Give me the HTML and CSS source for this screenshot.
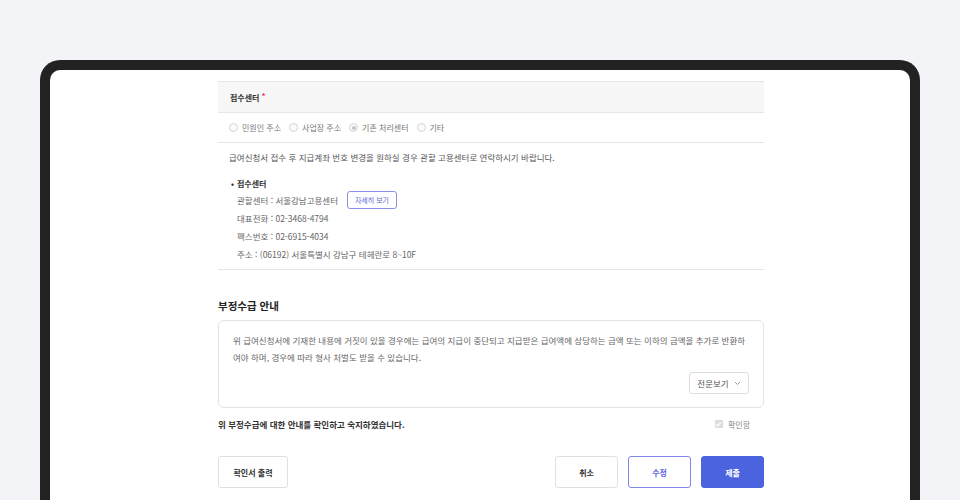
FILE: index.html
```html
<!DOCTYPE html>
<html lang="ko">
<head>
<meta charset="utf-8">
<link rel="stylesheet" href="styles.css">
</head>
<body>
<div class="device">
  <div class="content">
    <div class="field-head">접수센터 <span class="req">*</span></div>
    <div class="radio-row">
      <label class="radio"><span class="dot"></span>민원인 주소</label>
      <label class="radio"><span class="dot"></span>사업장 주소</label>
      <label class="radio"><span class="dot checked"></span>기존 처리센터</label>
      <label class="radio"><span class="dot"></span>기타</label>
    </div>
    <div class="info">
      <p class="notice">급여신청서 접수 후 지급계좌 번호 변경을 원하실 경우 관할 고용센터로 연락하시기 바랍니다.</p>
      <div class="bullet-title"><span class="bullet">•</span>접수센터</div>
      <div class="detail-row">관할센터 : 서울강남고용센터 <button class="btn-detail">자세히 보기</button></div>
      <div class="detail">대표전화 : 02-3468-4794</div>
      <div class="detail">팩스번호 : 02-6915-4034</div>
      <div class="detail">주소 : (06192) 서울특별시 강남구 테헤란로 8~10F</div>
    </div>

    <h2 class="sec-title">부정수급 안내</h2>
    <div class="notice-box">
      <p class="notice-text">위 급여신청서에 기재한 내용에 거짓이 있을 경우에는 급여의 지급이 중단되고 지급받은 급여액에 상당하는 금액 또는 이하의 금액을 추가로 반환하여야 하며, 경우에 따라 형사 처벌도 받을 수 있습니다.</p>
      <div class="box-foot">
        <button class="btn-more">전문보기
          <svg width="7" height="5" viewBox="0 0 7 5"><polyline points="1,1 3.5,3.5 6,1" fill="none" stroke="#999" stroke-width="1"/></svg>
        </button>
      </div>
    </div>

    <div class="agree-row">
      <span class="agree-text">위 부정수급에 대한 안내를 확인하고 숙지하였습니다.</span>
      <label class="check"><span class="box"><svg width="7" height="6" viewBox="0 0 7 6"><polyline points="1,3 2.8,4.8 6,1" fill="none" stroke="#fff" stroke-width="1.2"/></svg></span>확인함</label>
    </div>

    <div class="actions">
      <button class="btn">확인서 출력</button>
      <div class="actions-right">
        <button class="btn">취소</button>
        <button class="btn btn-outline">수정</button>
        <button class="btn btn-primary">제출</button>
      </div>
    </div>
  </div>
</div>
</body>
</html>
```

FILE: styles.css
```css
* { box-sizing: border-box; }
html, body { margin: 0; padding: 0; }
body {
  background: #f3f4f8;
  font-family: "Noto Sans CJK KR", "Noto Sans", sans-serif;
  color: #444;
  height: 500px;
  overflow: hidden;
}
.device {
  margin: 60px 40px 0;
  height: 460px;
  border: 10px solid #222;
  border-bottom: none;
  border-radius: 20px 20px 0 0;
  background: #fff;
  padding: 11px 0 0 168px;
}
.content { width: 546px; }

.field-head {
  height: 32px;
  background: #f7f7f7;
  border-top: 1px solid #e6e6e6;
  border-bottom: 1px solid #e6e6e6;
  padding-left: 12px;
  display: flex;
  align-items: center;
  font-size: 8px;
  font-weight: 700;
  color: #333;
}
.req { color: #e8344e; margin-left: 2px; position: relative; top: -2px; }

.radio-row {
  height: 30px;
  border-bottom: 1px solid #e6e6e6;
  padding-left: 11px;
  display: flex;
  align-items: center;
  gap: 8px;
  font-size: 8px;
  color: #777;
}
.radio { display: flex; align-items: center; gap: 4px; }
.dot {
  width: 9px; height: 9px;
  border: 1px solid #d4d4d4;
  border-radius: 50%;
  background: #fafafa;
  display: inline-flex;
  align-items: center;
  justify-content: center;
}
.dot.checked::after {
  content: "";
  width: 4px; height: 4px;
  border-radius: 50%;
  background: #c4c4c4;
}

.info {
  padding: 5px 11px 6px;
  border-bottom: 1px solid #e6e6e6;
  font-size: 8.5px;
  color: #555;
}
.notice { margin: 0; line-height: 18px; }
.bullet-title {
  margin-top: 11px;
  line-height: 14px;
  font-weight: 700;
  font-size: 8px;
  color: #333;
  display: flex;
}
.bullet { width: 8px; padding-left: 2px; }
.detail-row {
  padding-left: 8px;
  height: 18px;
  display: flex;
  align-items: center;
  color: #666;
}
.btn-detail {
  margin-left: 9px;
  height: 18px;
  width: 50px;
  padding: 0;
  border: 1px solid #8a91e6;
  border-radius: 3px;
  background: #fff;
  color: #5a63d8;
  font-family: inherit;
  font-size: 7px;
}
.detail { padding-left: 8px; line-height: 18px; color: #666; }

.sec-title {
  margin: 28px 0 6px;
  font-size: 10.5px;
  line-height: 16px;
  font-weight: 700;
  color: #222;
}
.notice-box {
  border: 1px solid #e3e3e3;
  border-radius: 6px;
  padding: 11px 14px 13px;
  height: 88px;
}
.notice-text {
  margin: 0;
  font-size: 8.5px;
  line-height: 17px;
  color: #666;
}
.box-foot { display: flex; justify-content: flex-end; margin-top: 6px; }
.btn-more {
  height: 22px;
  width: 60px;
  border: 1px solid #ddd;
  border-radius: 3px;
  background: #fff;
  color: #555;
  font-family: inherit;
  font-size: 8.5px;
  display: flex;
  align-items: center;
  justify-content: center;
  gap: 5px;
  padding: 0;
}

.agree-row {
  margin-top: 7px;
  height: 18px;
  display: flex;
  align-items: center;
  justify-content: space-between;
  padding-right: 14px;
  font-size: 8.5px;
}
.agree-text { font-weight: 700; color: #333; }
.check { display: flex; align-items: center; gap: 5px; color: #888; font-size: 8px; }
.box {
  width: 8px; height: 8px;
  background: #dcdcdc;
  border-radius: 1px;
  display: inline-flex;
  align-items: center;
  justify-content: center;
}

.actions {
  margin-top: 23px;
  display: flex;
  justify-content: space-between;
}
.actions-right { display: flex; gap: 10px; }
.btn {
  height: 32px;
  width: 63px;
  border: 1px solid #e0e0e0;
  border-radius: 3px;
  background: #fff;
  color: #333;
  font-family: inherit;
  font-size: 8px;
  font-weight: 700;
  padding: 0;
}
.actions > .btn { width: 70px; }
.btn-outline { border-color: #7f88ea; color: #5963dc; }
.btn-primary { border-color: #4c63df; background: #4c63df; color: #fff; }
```
